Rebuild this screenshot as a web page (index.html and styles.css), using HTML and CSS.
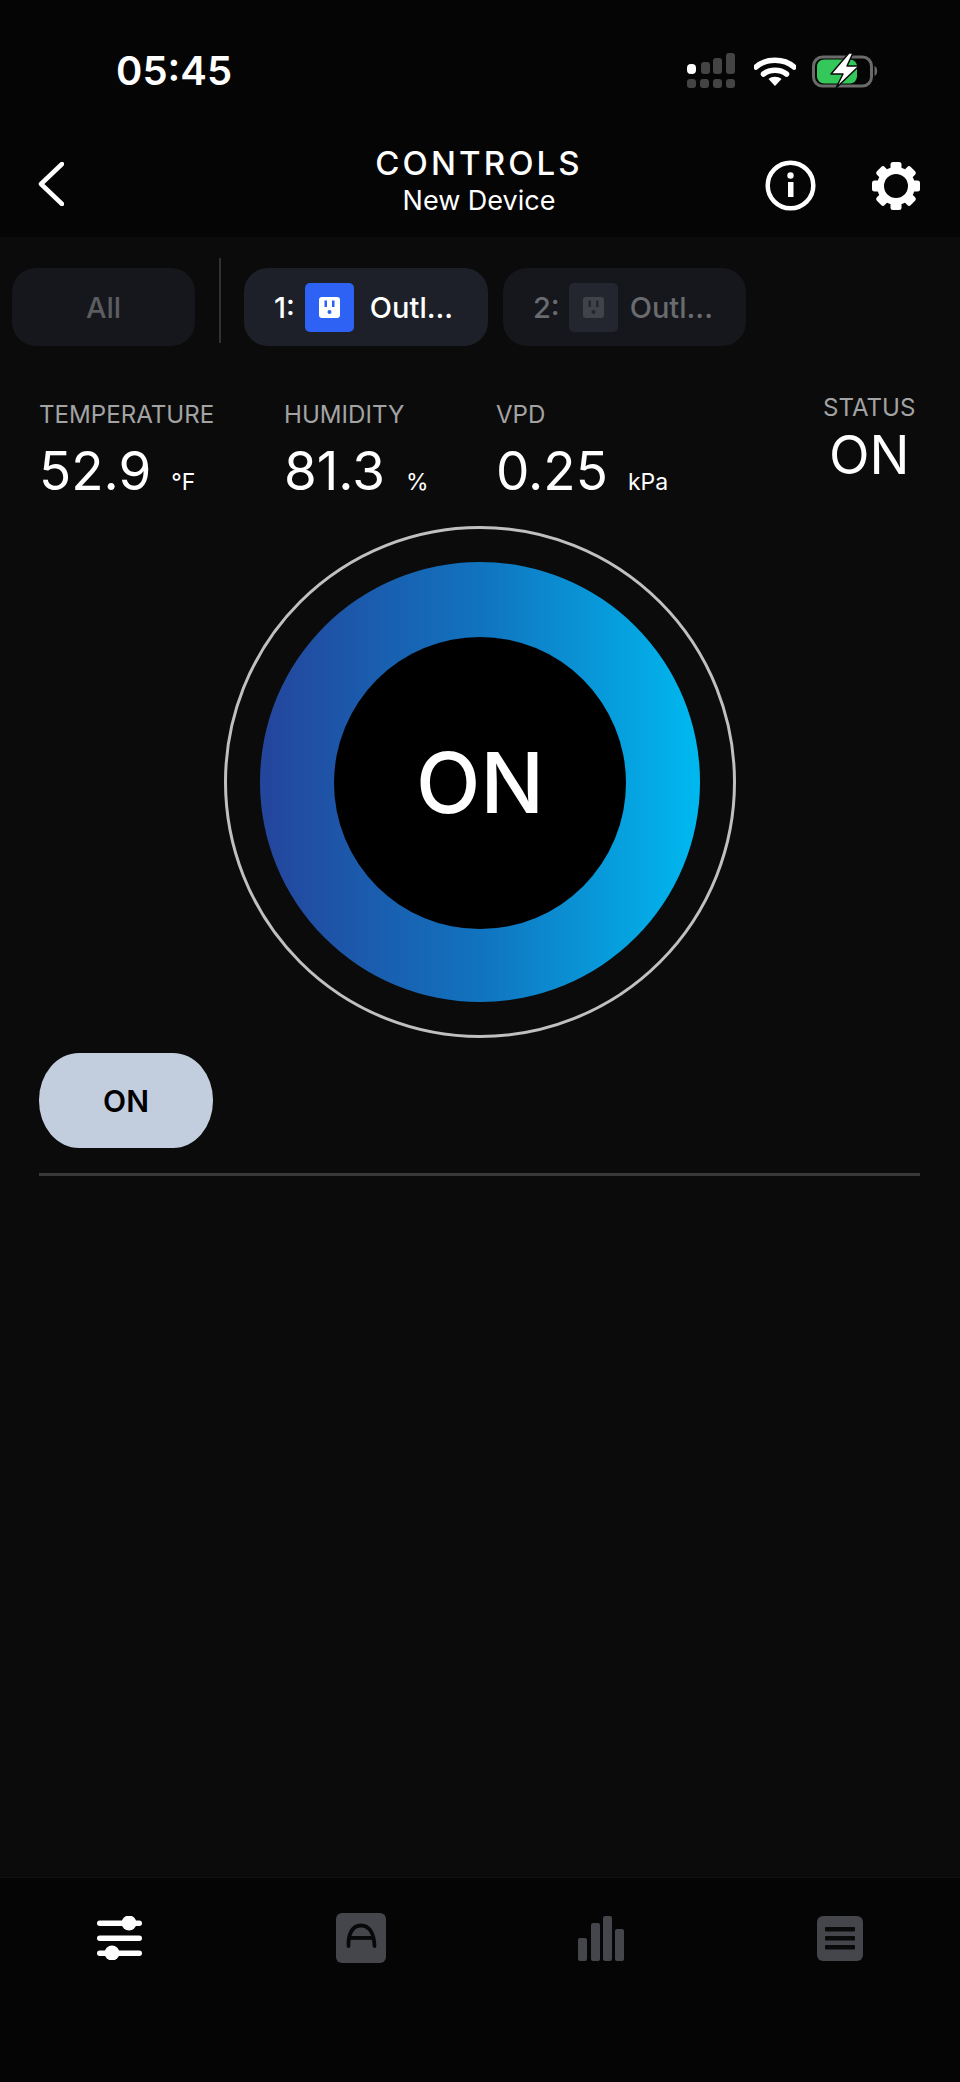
FILE: index.html
```html
<!DOCTYPE html>
<html lang="en">
  <head>
    <meta charset="UTF-8" />
    <meta name="viewport" content="width=device-width, initial-scale=1.0" />
    <title>Controls</title>
    <link rel="stylesheet" href="styles.css">
  </head>
  <body>
    <div class="phone">
      <div class="top">
        <div class="status-bar">
          <span class="clock">05:45</span>
          <div class="status-icons">
            <svg class="signal" width="48" height="35" viewBox="0 0 48 35">
              <rect x="0" y="11" width="9" height="10" rx="4" fill="#fff" />
              <rect x="14" y="9" width="9" height="12" rx="3" fill="#444" />
              <rect x="26" y="5" width="9" height="16" rx="3" fill="#444" />
              <rect x="39" y="0" width="9" height="21" rx="3" fill="#444" />
              <rect x="0" y="26" width="9" height="9" rx="3" fill="#444" />
              <rect x="13" y="26" width="9" height="9" rx="3" fill="#444" />
              <rect x="26" y="26" width="9" height="9" rx="3" fill="#444" />
              <rect x="39" y="26" width="9" height="9" rx="3" fill="#444" />
            </svg>
            <svg class="wifi" width="42" height="29" viewBox="0 0 42 29">
              <path d="M2 10 C12 1 30 1 40 10" fill="none" stroke="#fff" stroke-width="5.5" stroke-linecap="round" />
              <path d="M9.5 17 C16 12 26 12 32.500 17" fill="none" stroke="#fff" stroke-width="5.500" stroke-linecap="round" />
              <path d="M14.500 22 C18 19 24 19 27.500 22 L21 29 Z" fill="#fff" />
            </svg>
            <svg class="battery" width="68" height="35" viewBox="0 0 68 35">
              <rect x="1.500" y="4" width="58" height="29" rx="9" fill="none" stroke="#6a6a6a" stroke-width="3" />
              <rect x="5" y="6.500" width="40" height="24" rx="7" fill="#34c759" />
              <path d="M62.500 13 C66 14 66 22 62.500 23 Z" fill="#6a6a6a" />
              <path d="M37 0 L19 21 H31 L24 35 L47 13 H35 L41 0 Z" fill="#fff" stroke="#0a0a0a" stroke-width="1.500" stroke-linejoin="round" />
            </svg>
          </div>
        </div>
        <div class="header">
          <svg class="back" width="26" height="44" viewBox="0 0 26 44">
            <path d="M24 2 L3 22 L24 42" fill="none" stroke="#fff" stroke-width="4.500" stroke-linecap="round" stroke-linejoin="round" />
          </svg>
          <div class="title">
            <div class="title-main">CONTROLS</div>
            <div class="title-sub">New Device</div>
          </div>
          <div class="header-icons">
            <svg width="51" height="51" viewBox="0 0 51 51">
              <circle cx="25.500" cy="25.500" r="22.800" fill="none" stroke="#fff" stroke-width="4.500" />
              <rect x="23" y="22" width="5.500" height="15" fill="#fff" />
              <circle cx="25.500" cy="15.500" r="3.200" fill="#fff" />
            </svg>
            <svg width="48" height="48" viewBox="0 0 48 48">
              <g fill="#fff">
                <rect x="18.500" y="0" width="11" height="48" rx="2.500" />
                <rect x="18.500" y="0" width="11" height="48" rx="2.500" transform="rotate(45 24 24)" />
                <rect x="18.500" y="0" width="11" height="48" rx="2.500" transform="rotate(90 24 24)" />
                <rect x="18.500" y="0" width="11" height="48" rx="2.500" transform="rotate(135 24 24)" />
                <circle cx="24" cy="24" r="19" />
              </g>
              <circle cx="24" cy="24" r="12" fill="#050505" />
            </svg>
          </div>
        </div>
      </div>

      <div class="chips">
        <div class="chip chip-all">All</div>
        <div class="chip-divider"></div>
        <div class="chip chip-active">
          <span>1:</span>
          <span class="outlet outlet-on">
            <svg width="21" height="21" viewBox="0 0 21 21">
              <rect width="21" height="21" rx="3" fill="#fff" />
              <rect x="5.500" y="3.500" width="2.500" height="6.500" fill="#2d62f5" />
              <rect x="13" y="3.500" width="2.500" height="6.500" fill="#2d62f5" />
              <circle cx="10.500" cy="15" r="2" fill="#2d62f5" />
            </svg>
          </span>
          <span class="chip-name">Outl...</span>
        </div>
        <div class="chip chip-off">
          <span>2:</span>
          <span class="outlet outlet-off">
            <svg width="21" height="21" viewBox="0 0 21 21">
              <rect width="21" height="21" rx="3" fill="#41434a" />
              <rect x="5.500" y="3.500" width="2.500" height="6.500" fill="#24262e" />
              <rect x="13" y="3.500" width="2.500" height="6.500" fill="#24262e" />
              <circle cx="10.500" cy="15" r="2" fill="#24262e" />
            </svg>
          </span>
          <span class="chip-name">Outl...</span>
        </div>
      </div>

      <div class="stats">
        <div class="stat stat-temp">
          <div class="stat-label">TEMPERATURE</div>
          <div class="stat-value">52.9<span class="stat-unit">°F</span></div>
        </div>
        <div class="stat stat-hum">
          <div class="stat-label">HUMIDITY</div>
          <div class="stat-value">81.3<span class="stat-unit">%</span></div>
        </div>
        <div class="stat stat-vpd">
          <div class="stat-label">VPD</div>
          <div class="stat-value">0.25<span class="stat-unit">kPa</span></div>
        </div>
        <div class="stat stat-status">
          <div class="stat-label">STATUS</div>
          <div class="stat-value">ON</div>
        </div>
      </div>

      <div class="dial-wrap">
        <div class="dial">
          <div class="dial-ring">
            <div class="dial-center">ON</div>
          </div>
        </div>
      </div>

      <div class="mode-row">
        <button class="mode-button" type="button">ON</button>
      </div>
      <div class="rule"></div>

      <div class="spacer"></div>

      <div class="nav">
        <svg width="45" height="44" viewBox="0 0 45 44">
          <g fill="#fff">
            <rect x="0" y="4.500" width="45" height="5.500" rx="2.750" />
            <rect x="0" y="19.500" width="45" height="5.500" rx="2.750" />
            <rect x="0" y="34.500" width="45" height="5.500" rx="2.750" />
            <circle cx="32" cy="7" r="7.500" />
            <circle cx="15" cy="37" r="7.500" />
          </g>
        </svg>
        <svg class="nav-auto" width="50" height="50" viewBox="0 0 50 50">
          <rect width="50" height="50" rx="6" fill="#45464c" />
          <path d="M12.500 33 C12 20 17 12.500 25 12.500 C33 12.500 38 20 38.500 33" fill="none" stroke="#08080a" stroke-width="3.800" stroke-linecap="round" />
          <rect x="13" y="23" width="25" height="3.800" fill="#08080a" />
        </svg>
        <svg width="47" height="45" viewBox="0 0 47 45">
          <g fill="#45464c">
            <rect x="0" y="22" width="9" height="23" rx="2" />
            <rect x="13" y="7" width="9" height="38" rx="2" />
            <rect x="25" y="0" width="9" height="45" rx="2" />
            <rect x="37" y="13" width="9" height="32" rx="2" />
          </g>
        </svg>
        <svg width="46" height="45" viewBox="0 0 46 45">
          <rect width="46" height="45" rx="6" fill="#45464c" />
          <g fill="#0a0a0a">
            <rect x="8" y="11" width="30" height="4.500" rx="1" />
            <rect x="8" y="20" width="30" height="4.500" rx="1" />
            <rect x="8" y="29" width="30" height="4.500" rx="1" />
          </g>
        </svg>
      </div>
    </div>
  </body>
</html>
```

FILE: styles.css
```css
* {
  box-sizing: border-box;
}
html,
body {
  margin: 0;
  padding: 0;
  background: #0b0b0c;
}
body {
  font-family: Inter, "Noto Sans", sans-serif;
  color: #fff;
}
.phone {
  width: 960px;
  height: 2082px;
  display: flex;
  flex-direction: column;
  background: #0b0b0c;
  overflow: hidden;
}

/* status bar + title */
.top {
  height: 237px;
  background: #050505;
}
.status-bar {
  height: 110px;
  padding: 40px 80px 0 116px;
  display: flex;
  justify-content: space-between;
}
.clock {
  font-size: 40px;
  line-height: 62px;
  font-weight: 600;
  height: 62px;
}
.status-icons {
  display: flex;
  align-items: flex-start;
  padding-top: 13px;
}
.signal {
  margin: 0 17px 0 1px;
}
.wifi {
  margin: 4px 16px 0 2px;
}
.header {
  height: 127px;
  padding: 0 40px 0 38px;
  display: grid;
  grid-template-columns: 1fr auto 1fr;
  align-items: start;
}
.back {
  margin-top: 52px;
}
.title {
  margin-top: 33px;
  text-align: center;
}
.title-main {
  font-size: 33px;
  line-height: 40px;
  font-weight: 500;
  letter-spacing: 3.100px;
}
.title-sub {
  font-size: 27px;
  line-height: 34px;
  margin-top: 1px;
}
.header-icons {
  display: flex;
  align-items: center;
  justify-content: flex-end;
  gap: 56px;
  margin-top: 50px;
}

/* outlet chips */
.chips {
  height: 143px;
  padding: 21px 0 0 12px;
  display: flex;
  align-items: flex-start;
}
.chip {
  height: 78px;
  margin-top: 10px;
  border-radius: 24px;
  display: flex;
  align-items: center;
  font-size: 29px;
  font-weight: 500;
}
.chip-all {
  width: 183px;
  justify-content: center;
  background: #15171c;
  color: #5c5d61;
}
.chip-divider {
  width: 2px;
  height: 85px;
  margin: 0 23px 0 24px;
  background: #303134;
}
.chip-active {
  width: 244px;
  padding-left: 30px;
  background: #1d2028;
  color: #fff;
}
.chip-off {
  width: 243px;
  margin-left: 15px;
  padding-left: 30px;
  background: #15171c;
  color: #6a6b6f;
}
.outlet {
  width: 49px;
  height: 49px;
  margin: 0 16px 0 10px;
  border-radius: 5px;
  display: flex;
  align-items: center;
  justify-content: center;
}
.outlet-on {
  background: #2d62f5;
}
.outlet-off {
  margin: 0 12px 0 9px;
  background: #23262f;
}

/* readings */
.stats {
  height: 147px;
  padding-left: 39px;
  display: flex;
}
.stat-label {
  font-size: 24.100px;
  line-height: 30px;
  color: #a3a3a3;
}
.stat-value {
  font-size: 53px;
  line-height: 62px;
  margin-top: 10px;
  display: flex;
  align-items: baseline;
}
.stat-unit {
  font-size: 23px;
  line-height: 30px;
}
.stat-temp {
  width: 245px;
  padding-top: 20px;
}
.stat-temp .stat-unit {
  margin-left: 20px;
}
.stat-hum {
  width: 212px;
  padding-top: 20px;
}
.stat-hum .stat-unit {
  margin-left: 21px;
}
.stat-vpd {
  width: 327px;
  padding-top: 20px;
}
.stat-vpd .stat-unit {
  margin-left: 20px;
}
.stat-status {
  padding-top: 13px;
  text-align: center;
}
.stat-status .stat-value {
  justify-content: center;
  margin-top: 1px;
}

/* big dial */
.dial-wrap {
  display: flex;
  justify-content: center;
}
.dial {
  width: 512px;
  height: 512px;
  margin-top: -1px;
  border: 3px solid #c0c0c0;
  border-radius: 50%;
  display: flex;
  align-items: center;
  justify-content: center;
}
.dial-ring {
  width: 440px;
  height: 440px;
  border-radius: 50%;
  background: linear-gradient(90deg, #24459c 0%, #1173bf 50%, #00b9f0 100%);
  display: flex;
  align-items: center;
  justify-content: center;
}
.dial-center {
  width: 292px;
  height: 292px;
  margin-top: 1px;
  border-radius: 50%;
  background: #000;
  display: flex;
  align-items: center;
  justify-content: center;
  font-size: 84px;
  font-weight: 500;
}

.mode-row {
  padding: 15px 0 0 39px;
}
.mode-button {
  width: 174px;
  height: 95px;
  border: 0;
  padding: 0;
  border-radius: 40px / 47px;
  background: #c2cedd;
  color: #000;
  font-family: Inter, "Noto Sans", sans-serif;
  font-size: 30px;
  font-weight: 600;
}
.rule {
  height: 3px;
  margin: 25px 40px 0 39px;
  background: #38383a;
}
.spacer {
  flex: 1;
}

/* bottom tabs */
.nav {
  height: 205px;
  padding: 38px 97px 0;
  display: flex;
  justify-content: space-between;
  align-items: flex-start;
  background: #050505;
  border-top: 1px solid #111;
}
.nav-auto {
  margin: -3px 0 0 2px;
}
```
